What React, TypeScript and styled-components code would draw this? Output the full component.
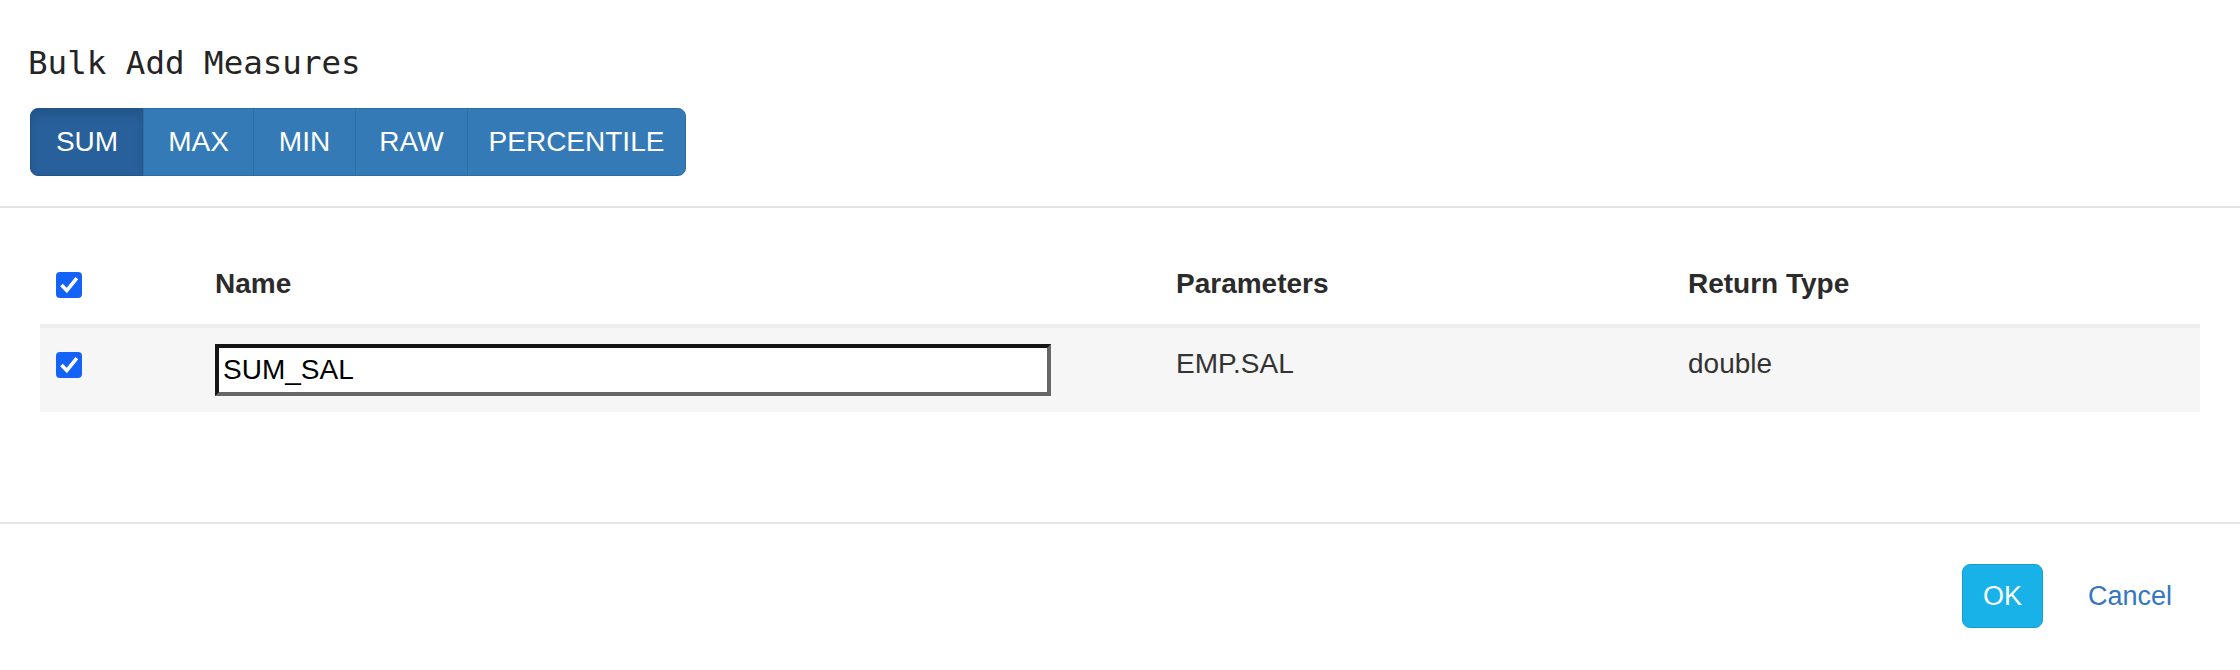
import styled, { createGlobalStyle } from 'styled-components'

const GlobalStyle = createGlobalStyle`
  html, body {
    margin: 0;
    padding: 0;
    background: #fff;
  }
  body {
    font-family: "Liberation Sans", Arial, Helvetica, sans-serif;
    font-size: 28px;
    color: #333;
  }
`

const Dialog = styled.div`
  display: flex;
  flex-direction: column;
  width: 100%;
`

const Header = styled.header`
  padding: 43px 30px 30px;
  border-bottom: 2px solid #e5e5e5;
`

const Title = styled.h4`
  margin: 0 0 25px -2px;
  font-family: "DejaVu Sans Mono", "Liberation Mono", monospace;
  font-size: 32.5px;
  font-weight: 400;
  line-height: 40px;
  color: #242424;
`

const Segmented = styled.div`
  display: flex;
  width: max-content;
`

const Segment = styled.button<{ $active?: boolean; $width: number }>`
  box-sizing: border-box;
  width: ${({ $width }) => $width}px;
  font-family: inherit;
  font-size: 28px;
  line-height: 40px;
  padding: 13px 0;
  margin: 0 0 0 -1px;
  text-align: center;
  white-space: nowrap;
  color: #fff;
  cursor: pointer;
  background: ${({ $active }) => ($active ? '#28609b' : '#337ab7')};
  border: 1px solid ${({ $active }) => ($active ? '#215489' : '#2e6da4')};
  box-shadow: ${({ $active }) => ($active ? 'inset 0 6px 10px rgba(0, 0, 0, 0.125)' : 'none')};

  &:first-child {
    margin-left: 0;
    border-radius: 8px 0 0 8px;
  }
  &:last-child {
    border-radius: 0 8px 8px 0;
  }
`

const Body = styled.section`
  padding: 40px 40px 110px;
`

const Grid = styled.div`
  display: grid;
  grid-template-columns: 159px 961px 512px 528px;
`

const HeadCell = styled.div`
  padding: 16px 16px 20px;
  line-height: 40px;
  font-weight: 700;
  color: #2b2b2b;
  border-bottom: 4px solid #eeeeee;
`

const Cell = styled.div`
  padding: 16px;
  line-height: 40px;
  background: #f6f6f6;
  color: #333;
`

const Box = styled.span`
  display: block;
  width: 26px;
  height: 26px;
  margin-top: 8px;
  border-radius: 4px;
  background: #1462f8;

  svg {
    display: block;
  }
`

const NameInput = styled.input`
  display: block;
  box-sizing: border-box;
  width: 836px;
  height: 52px;
  margin: 0;
  padding: 0 4px;
  font-family: "Liberation Sans", Arial, Helvetica, sans-serif;
  font-size: 28px;
  color: #000;
  background: #fff;
  border-style: solid;
  border-width: 4px;
  border-color: #151515 #676767 #676767 #151515;
  outline: none;
`

const Footer = styled.footer`
  display: flex;
  justify-content: flex-end;
  align-items: center;
  padding: 40px 46px 40px;
  border-top: 2px solid #e5e5e5;
`

const OkButton = styled.button`
  height: 64px;
  padding: 0 20px;
  font-family: inherit;
  font-size: 27px;
  color: #fff;
  background: #18b2e8;
  border: 1px solid #149fd4;
  border-radius: 8px;
  cursor: pointer;
`

const LinkButton = styled.button`
  height: 64px;
  margin-left: 23px;
  padding: 0 22px;
  font-family: inherit;
  font-size: 27px;
  color: #3476c2;
  background: transparent;
  border: none;
  cursor: pointer;
`

function CheckBox() {
  return (
    <Box role="checkbox" aria-checked="true">
      <svg width="26" height="26" viewBox="0 0 26 26">
        <path d="M5.5 13 L10.8 18.6 L20.8 6.2" fill="none" stroke="#fff" strokeWidth="3.6" strokeLinejoin="miter" />
      </svg>
    </Box>
  )
}

const aggregations = [
  { label: 'SUM', width: 114 },
  { label: 'MAX', width: 111 },
  { label: 'MIN', width: 103 },
  { label: 'RAW', width: 113 },
  { label: 'PERCENTILE', width: 219 },
]

export default function App() {
  return (
    <>
      <GlobalStyle />
      <Dialog>
        <Header>
          <Title>Bulk Add Measures</Title>
          <Segmented>
            {aggregations.map((a) => (
              <Segment key={a.label} $active={a.label === 'SUM'} $width={a.width}>
                {a.label}
              </Segment>
            ))}
          </Segmented>
        </Header>
        <Body>
          <Grid>
            <HeadCell>
              <CheckBox />
            </HeadCell>
            <HeadCell>Name</HeadCell>
            <HeadCell>Parameters</HeadCell>
            <HeadCell>Return Type</HeadCell>

            <Cell>
              <CheckBox />
            </Cell>
            <Cell>
              <NameInput defaultValue="SUM_SAL" />
            </Cell>
            <Cell>EMP.SAL</Cell>
            <Cell>double</Cell>
          </Grid>
        </Body>
        <Footer>
          <OkButton>OK</OkButton>
          <LinkButton>Cancel</LinkButton>
        </Footer>
      </Dialog>
    </>
  )
}
